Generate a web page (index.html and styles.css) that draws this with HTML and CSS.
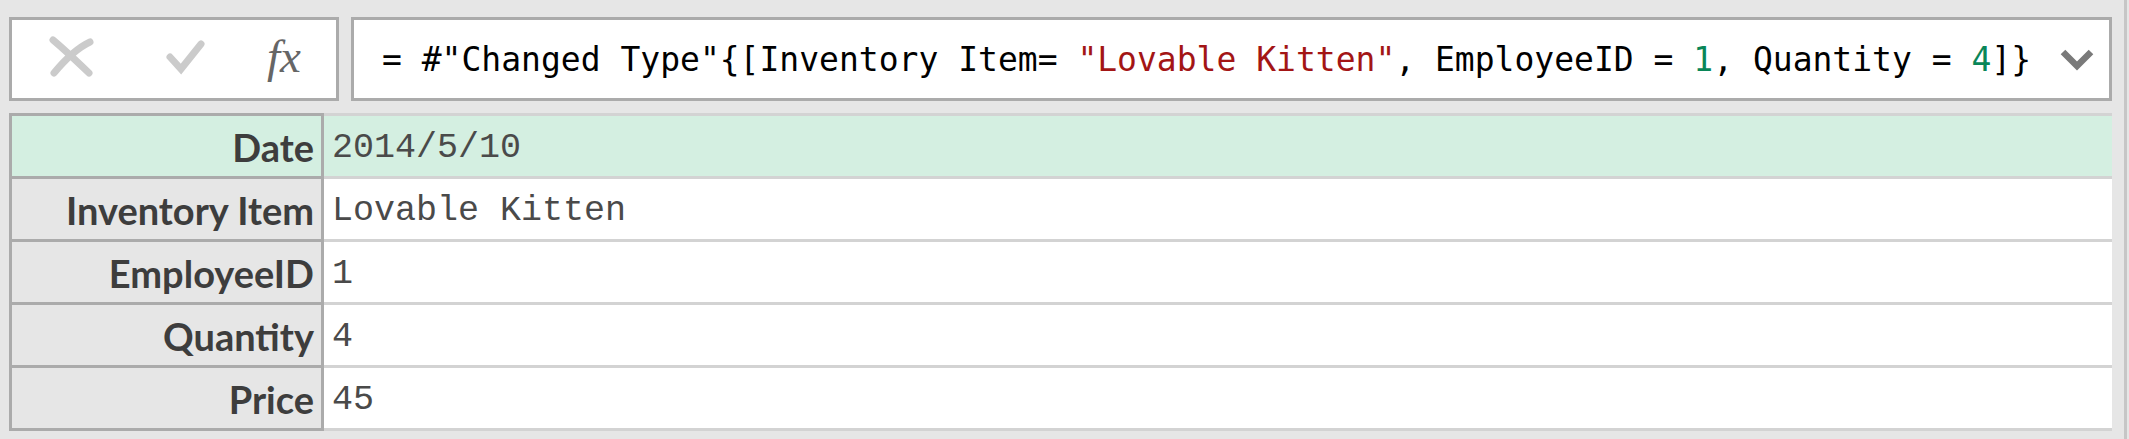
FILE: index.html
```html
<!DOCTYPE html>
<html>
<head>
<meta charset="utf-8">
<link rel="stylesheet" href="styles.css">
</head>
<body>
<div class="app">
  <div class="main">
    <div class="toolbar">
      <div class="fxbox">
        <svg class="ico-x" width="46" height="42" viewBox="0 0 46 42">
          <path d="M4 4 Q16 14 40 37" />
          <path d="M41 6 Q24 14 5 37" />
        </svg>
        <svg class="ico-check" width="40" height="36" viewBox="0 0 40 36">
          <path d="M4 18 L15 30 L35 5" />
        </svg>
        <span class="fx">fx</span>
      </div>
      <div class="formula">
        <div class="code">= #"Changed Type"{[Inventory Item= <span class="str">"Lovable Kitten"</span>, EmployeeID = <span class="num">1</span>, Quantity = <span class="num">4</span>]}</div>
        <svg class="chev" width="36" height="24" viewBox="0 0 36 24">
          <path d="M4 5 L18 19 L32 5" />
        </svg>
      </div>
    </div>
    <div class="grid">
      <div class="lab sel">Date</div><div class="val sel">2014/5/10</div>
      <div class="lab">Inventory Item</div><div class="val">Lovable Kitten</div>
      <div class="lab">EmployeeID</div><div class="val">1</div>
      <div class="lab">Quantity</div><div class="val">4</div>
      <div class="lab last">Price</div><div class="val last">45</div>
    </div>
  </div>
  <div class="edge"></div>
</div>
</body>
</html>
```
FILE: styles.css
```css
html, body {
  margin: 0;
  padding: 0;
  background: #e6e6e6;
  height: 100%;
  overflow: hidden;
}
.app {
  display: flex;
  height: 439px;
}
.main {
  width: 2103px;
  margin-left: 9px;
  padding-top: 17px;
}
.edge {
  width: 3px;
  margin-left: 12px;
  background: #c6c6c6;
  height: 439px;
}
.toolbar {
  display: flex;
  gap: 12px;
  height: 84px;
}
.fxbox {
  box-sizing: border-box;
  width: 330px;
  height: 84px;
  border: 3px solid #ababab;
  background: #fff;
  display: flex;
  align-items: center;
}
.ico-x {
  margin-left: 37px;
  margin-top: -4px;
  fill: none;
  stroke: #cbcbcb;
  stroke-width: 7;
  stroke-linecap: round;
}
.ico-check {
  margin-left: 71px;
  margin-top: -4px;
  fill: none;
  stroke: #cbcbcb;
  stroke-width: 7;
  stroke-linecap: round;
  stroke-linejoin: miter;
}
.fx {
  margin-left: 61px;
  font-family: "Liberation Serif", serif;
  font-style: italic;
  font-size: 47px;
  color: #666;
  margin-top: -6px;
}
.formula {
  flex: 1;
  box-sizing: border-box;
  height: 84px;
  border: 3px solid #ababab;
  background: #fff;
  display: flex;
  align-items: center;
  padding-left: 28px;
}
.code {
  flex: 1;
  font-family: "DejaVu Sans Mono", monospace;
  font-size: 33px;
  color: #000;
  white-space: pre;
}
.str { color: #a31515; }
.num { color: #098658; }
.chev {
  margin-right: 14px;
  fill: none;
  stroke: #7a7a7a;
  stroke-width: 6.5;
}
.grid {
  margin-top: 12px;
  display: grid;
  grid-template-columns: 315px 1fr;
  grid-auto-rows: 63px;
}
.lab {
  box-sizing: border-box;
  border-left: 3px solid #ababab;
  border-right: 3px solid #ababab;
  border-top: 3px solid #ababab;
  background: #e6e6e6;
  display: flex;
  align-items: center;
  justify-content: flex-end;
  padding-right: 7px;
  padding-top: 2px;
  font-family: "Lato", sans-serif;
  font-weight: 700;
  font-size: 38px;
  color: #3d3d3d;
}
.val {
  box-sizing: border-box;
  border-top: 3px solid #d3d3d3;
  background: #fff;
  display: flex;
  align-items: center;
  padding-left: 8px;
  padding-top: 3px;
  font-family: "Liberation Mono", monospace;
  font-size: 35px;
  color: #4a4a4a;
}
.sel.val { background: #d4efe1; }
.sel.lab { background: #d4efe1; }
.lab.last { border-bottom: 3px solid #ababab; height: 66px; }
.val.last { border-bottom: 3px solid #d3d3d3; height: 66px; }
```
